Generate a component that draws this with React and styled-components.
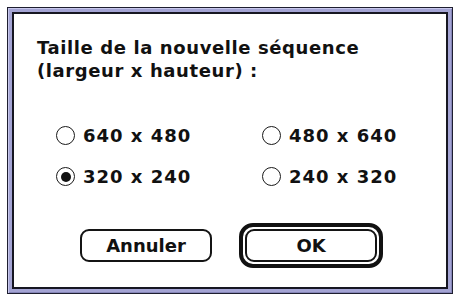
import React, { useState } from "react";
import styled, { createGlobalStyle } from "styled-components";

const Global = createGlobalStyle`
  html, body { margin: 0; padding: 0; background: #ffffff; }
  body { font-family: "DejaVu Sans", "Liberation Sans", sans-serif; }
`;

const Page = styled.div`
  padding: 7px;
  width: 456px;
  height: 298px;
  box-sizing: border-box;
`;

const Frame = styled.div`
  width: 446px;
  height: 287px;
  box-sizing: border-box;
  border: 1px solid #1e1e30;
  background: #a4a4d4;
  box-shadow: inset 1px 1px 0 #c8c8ec, inset -1px -1px 0 #8686b8;
  padding: 4px;
`;

const Panel = styled.div`
  height: 100%;
  box-sizing: border-box;
  border: 2px solid #161622;
  background: #ffffff;
  display: flex;
  flex-direction: column;
  padding: 22px 0 0 23px;
  color: #111111;
  font-weight: bold;
  font-size: 18px;
`;

const Prompt = styled.div`
  line-height: 23px;
  letter-spacing: 0.6px;
  white-space: pre;
`;

const Choices = styled.div`
  display: grid;
  grid-template-columns: 206px 206px;
  grid-auto-rows: 41px;
  margin: 33px 0 0 19px;
`;

const Choice = styled.label`
  display: flex;
  align-items: center;
  gap: 8px;
  letter-spacing: 1px;
  cursor: default;
`;

const Circle = styled.span`
  width: 19px;
  height: 19px;
  box-sizing: border-box;
  border-radius: 50%;
  border: 1.3px solid #1a1a1a;
  display: flex;
  align-items: center;
  justify-content: center;
  &::after {
    content: "";
    width: 10px;
    height: 10px;
    border-radius: 50%;
    background: ${(p) => (p.$on ? "#111" : "transparent")};
  }
`;

const Buttons = styled.div`
  display: flex;
  align-items: center;
  gap: 27px;
  margin: 26px 0 0 43px;
`;

const Button = styled.button`
  width: 132px;
  height: 33px;
  box-sizing: border-box;
  border: 2px solid #141414;
  border-radius: 9px;
  background: #ffffff;
  color: #111111;
  font-family: "DejaVu Sans", "Liberation Sans", sans-serif;
  font-weight: bold;
  font-size: 18px;
  padding: 0;
  margin: 0;
  display: flex;
  align-items: center;
  justify-content: center;
`;

const DefaultRing = styled.div`
  border: 4px solid #111111;
  border-radius: 14px;
  padding: 2px;
  display: flex;
`;

const options = [
  ["640 x 480", "a"],
  ["480 x 640", "b"],
  ["320 x 240", "c"],
  ["240 x 320", "d"],
];

export default function App() {
  const [sel, setSel] = useState("c");
  return (
    <>
      <Global />
      <Page>
        <Frame>
          <Panel>
            <Prompt>{"Taille de la nouvelle séquence\n(largeur x hauteur) :"}</Prompt>
            <Choices>
              {options.map(([label, id]) => (
                <Choice key={id} onClick={() => setSel(id)}>
                  <Circle $on={sel === id} />
                  {label}
                </Choice>
              ))}
            </Choices>
            <Buttons>
              <Button>Annuler</Button>
              <DefaultRing>
                <Button>OK</Button>
              </DefaultRing>
            </Buttons>
          </Panel>
        </Frame>
      </Page>
    </>
  );
}
